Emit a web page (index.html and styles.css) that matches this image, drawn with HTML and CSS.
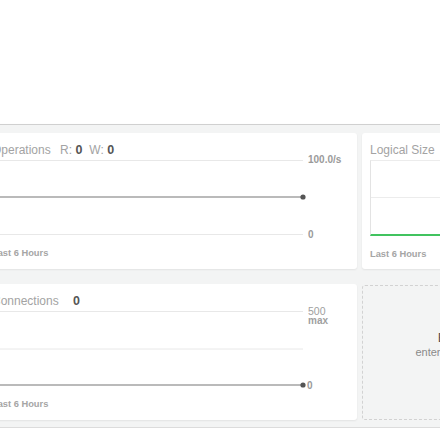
FILE: index.html
```html
<!DOCTYPE html>
<html>
<head>
<meta charset="utf-8">
<link rel="stylesheet" href="styles.css">
</head>
<body>
<div class="top"></div>
<div class="panel">
  <div class="grid">
    <div class="card">
      <div class="title">Operations <span class="metric">R: <b>0</b></span><span class="metric">W: <b>0</b></span></div>
      <div class="chart-row">
        <svg class="chart" width="311" height="75" viewBox="0 0 311 75">
          <line x1="0" y1="0.5" x2="311" y2="0.5" class="grid-line"/>
          <line x1="0" y1="74.5" x2="311" y2="74.5" class="grid-line"/>
          <line x1="0" y1="37" x2="311" y2="37" class="data-line"/>
          <circle cx="311" cy="37" r="2.6" class="dot"/>
        </svg>
        <div class="labels">
          <span class="lab first">100.0/s</span>
          <span class="lab last">0</span>
        </div>
      </div>
      <div class="foot">Last 6 Hours</div>
    </div>
    <div class="card">
      <div class="title">Logical Size</div>
      <div class="size-box">
        <div class="size-mid"></div>
      </div>
      <div class="foot">Last 6 Hours</div>
    </div>
    <div class="card">
      <div class="title">Connections <span class="metric wide"><b>0</b></span></div>
      <div class="chart-row">
        <svg class="chart" width="311" height="75" viewBox="0 0 311 75">
          <line x1="0" y1="0.5" x2="311" y2="0.5" class="grid-line"/>
          <line x1="0" y1="38" x2="311" y2="38" class="grid-line"/>
          <line x1="0" y1="74" x2="311" y2="74" class="data-line"/>
          <circle cx="311" cy="74" r="2.6" class="dot"/>
        </svg>
        <div class="labels">
          <span class="lab first max-group"><span class="mx-num">500</span><span class="mx-word">max</span></span>
          <span class="lab last tight">0</span>
        </div>
      </div>
      <div class="foot">Last 6 Hours</div>
    </div>
    <div class="promo">
      <div class="promo-title">Enhance Your Experience</div>
      <div class="promo-text">enterprise security options, upgrade now!</div>
    </div>
  </div>
</div>
<div class="after"></div>
</body>
</html>
```
FILE: styles.css
```css
html, body {
  margin: 0;
  padding: 0;
  background: #ffffff;
  overflow: hidden;
  font-family: "Liberation Sans", Arial, sans-serif;
}
.top {
  height: 124px;
}
.panel {
  background: #f3f4f4;
  border-top: 1px solid #d0d0d0;
  border-bottom: 1px solid #dcdcdc;
  box-shadow: 0 1px 2px rgba(0,0,0,0.08);
  padding: 8px 0 7px 0;
}
.grid {
  display: grid;
  grid-template-columns: 373px 300px;
  grid-template-rows: 136px 136px;
  column-gap: 5px;
  row-gap: 15px;
  margin-left: -16px;
}
.card {
  background: #ffffff;
  border-radius: 3px;
  box-shadow: 0 1px 2px rgba(0,0,0,0.07);
  padding: 0 8px;
  display: flex;
  flex-direction: column;
}
.title {
  height: 27px;
  box-sizing: border-box;
  padding-top: 9px;
  font-size: 12px;
  line-height: 16px;
  color: #a3a3a3;
  white-space: nowrap;
}
.metric {
  margin-left: 6px;
}
.metric.wide {
  margin-left: 11px;
}
.metric + .metric {
  margin-left: 7px;
}
.metric b {
  color: #555555;
  font-weight: bold;
  font-size: 12.5px;
}
.chart-row {
  display: flex;
  height: 75px;
}
.chart {
  display: block;
  flex: 0 0 311px;
  overflow: visible;
}
.grid-line {
  stroke: #e8e8e8;
  stroke-width: 1;
}
.data-line {
  stroke: #a3a3a3;
  stroke-width: 1.6;
}
.dot {
  fill: #555555;
}
.labels {
  flex: 1;
  margin-left: 5px;
  display: flex;
  flex-direction: column;
  justify-content: space-between;
}
.lab {
  font-size: 10px;
  font-weight: bold;
  line-height: 12px;
  color: #9a9a9a;
}
.lab.first {
  margin-top: -6px;
}
.lab.last {
  margin-bottom: -6px;
}
.lab.tight {
  margin-left: -1px;
}
.max-group {
  display: flex;
  flex-direction: column;
  margin-top: -5px !important;
  font-weight: normal;
  color: #a0a0a0;
}
.mx-num {
  font-size: 10.5px;
  line-height: 10px;
}
.mx-word {
  font-size: 10px;
  line-height: 9px;
  font-weight: bold;
}
.foot {
  padding-top: 12px;
  font-size: 9.3px;
  font-weight: bold;
  line-height: 12px;
  color: #a5a5a5;
}
.size-box {
  height: 73px;
  border-left: 1px solid #e3e3e3;
  border-top: 1px solid #ececec;
  border-bottom: 2px solid #41c35f;
  display: flex;
  flex-direction: column;
  justify-content: center;
}
.size-mid {
  height: 1px;
  background: #ececec;
}
.promo {
  margin: 1px 0 0 0;
  border: 1px dashed #d2d2d2;
  border-radius: 3px;
  box-sizing: border-box;
  display: flex;
  flex-direction: column;
  align-items: center;
  justify-content: flex-start;
  text-align: center;
  padding-top: 44px;
  padding-left: 8px;
}
.promo-title {
  font-size: 13.6px;
  line-height: 15px;
  color: #555555;
  white-space: nowrap;
}
.promo-text {
  font-size: 11px;
  line-height: 15px;
  color: #8a8a8a;
  white-space: nowrap;
}
```
